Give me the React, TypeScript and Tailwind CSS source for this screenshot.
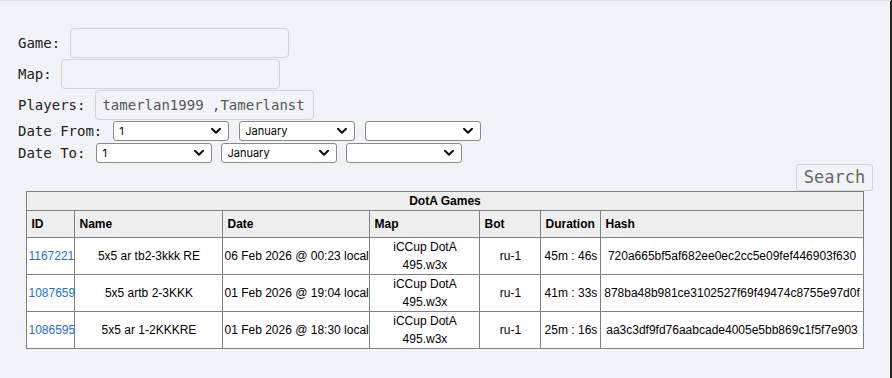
import React from "react";

const mono = { fontFamily: '"DejaVu Sans Mono", "Liberation Mono", monospace' };
const sans = { fontFamily: '"Liberation Sans", Arial, sans-serif' };

function Chevron() {
  return (
    <svg width="10" height="7" viewBox="0 0 10 7" className="absolute right-[7px] top-1/2 -translate-y-1/2 pointer-events-none">
      <path d="M1 1.2 L5 5.2 L9 1.2" fill="none" stroke="#111" strokeWidth="2" strokeLinecap="round" strokeLinejoin="round" />
    </svg>
  );
}

function Sel({ value }: { value: string }) {
  return (
    <div className="relative w-[116px] h-[20px] bg-white border border-[#8a8a8a] rounded-[3px] flex items-center pl-[5px] text-[11px] text-black" style={{ fontFamily: 'Inter, "Liberation Sans", sans-serif' }}>
      <span>{value}</span>
      <Chevron />
    </div>
  );
}

const rows = [
  { id: "1167221", name: "5x5 ar tb2-3kkk RE", date: "06 Feb 2026 @ 00:23 local", bot: "ru-1", dur: "45m : 46s", hash: "720a665bf5af682ee0ec2cc5e09fef446903f630" },
  { id: "1087659", name: "5x5 artb 2-3KKK", date: "01 Feb 2026 @ 19:04 local", bot: "ru-1", dur: "41m : 33s", hash: "878ba48b981ce3102527f69f49474c8755e97d0f" },
  { id: "1086595", name: "5x5 ar 1-2KKKRE", date: "01 Feb 2026 @ 18:30 local", bot: "ru-1", dur: "25m : 16s", hash: "aa3c3df9fd76aabcade4005e5bb869c1f5f7e903" },
];

export default function App() {
  const th = "border border-[#808080] px-[4px] py-[4px] text-left font-bold";
  const td = "border border-[#808080] p-0 text-center align-middle whitespace-nowrap";
  return (
    <div className="w-[892px] h-[378px] bg-[#f2f3f7] border-t border-[#e1e2e6] border-r-2 border-r-[#222] overflow-hidden relative">
      <div className="pl-[18px] pt-[27px] flex flex-col gap-[1px] text-[14px] text-[#222]" style={mono}>
        <div className="flex items-center gap-[10px]">
          <span>Game:</span>
          <div className="w-[219px] h-[30px] border border-[#d0d2d6] rounded-[4px] bg-[#f2f3f7]" />
        </div>
        <div className="flex items-center gap-[9px]">
          <span>Map:</span>
          <div className="w-[219px] h-[30px] border border-[#d0d2d6] rounded-[4px] bg-[#f2f3f7]" />
        </div>
        <div className="flex items-center gap-[10px]">
          <span>Players:</span>
          <div className="w-[219px] h-[30px] border border-[#d0d2d6] rounded-[4px] bg-[#f2f3f7] overflow-hidden flex items-center pl-[6px] text-[#555] whitespace-nowrap">
            tamerlan1999 ,Tamerlanst
          </div>
        </div>
        <div className="flex items-center gap-[10px] h-[20px]">
          <span className="mr-[1px]">Date From:</span>
          <Sel value="1" />
          <Sel value="January" />
          <Sel value="" />
        </div>
        <div className="flex items-center gap-[9px] h-[20px] mt-[1px]">
          <span className="mr-[2px]">Date To:</span>
          <Sel value="1" />
          <Sel value="January" />
          <Sel value="" />
        </div>
      </div>
      <div className="flex justify-end pr-[17px] mt-[1px]">
        <div className="w-[77px] h-[27px] border border-[#cfd1d5] rounded-[3px] flex items-center justify-center text-[17px] text-[#666]" style={mono}>
          Search
        </div>
      </div>
      <div className="flex justify-center">
        <table className="table-fixed border-collapse border border-[#808080] text-[12px] leading-[18px] text-black bg-white w-[836px]" style={sans}>
          <colgroup>
            <col style={{ width: 48 }} />
            <col style={{ width: 148 }} />
            <col style={{ width: 147 }} />
            <col style={{ width: 110 }} />
            <col style={{ width: 61 }} />
            <col style={{ width: 60 }} />
            <col style={{ width: 262 }} />
          </colgroup>
          <thead>
            <tr className="bg-[#eeeeee]">
              <th colSpan={7} className="border border-[#808080] p-0 text-center font-bold">DotA Games</th>
            </tr>
            <tr className="bg-[#eeeeee]">
              <th className={th}>ID</th>
              <th className={th}>Name</th>
              <th className={th}>Date</th>
              <th className={th}>Map</th>
              <th className={th}>Bot</th>
              <th className={th}>Duration</th>
              <th className={th}>Hash</th>
            </tr>
          </thead>
          <tbody>
            {rows.map((r) => (
              <tr key={r.id}>
                <td className={td + " text-left pl-[1px]"}>
                  <span className="text-[#1a6fe0]">{r.id}</span>
                </td>
                <td className={td}>{r.name}</td>
                <td className={td + " text-left pl-[1px]"}>{r.date}</td>
                <td className={td}>
                  iCCup DotA
                  <br />
                  495.w3x
                </td>
                <td className={td}>{r.bot}</td>
                <td className={td}>{r.dur}</td>
                <td className={td}>{r.hash}</td>
              </tr>
            ))}
          </tbody>
        </table>
      </div>
    </div>
  );
}
